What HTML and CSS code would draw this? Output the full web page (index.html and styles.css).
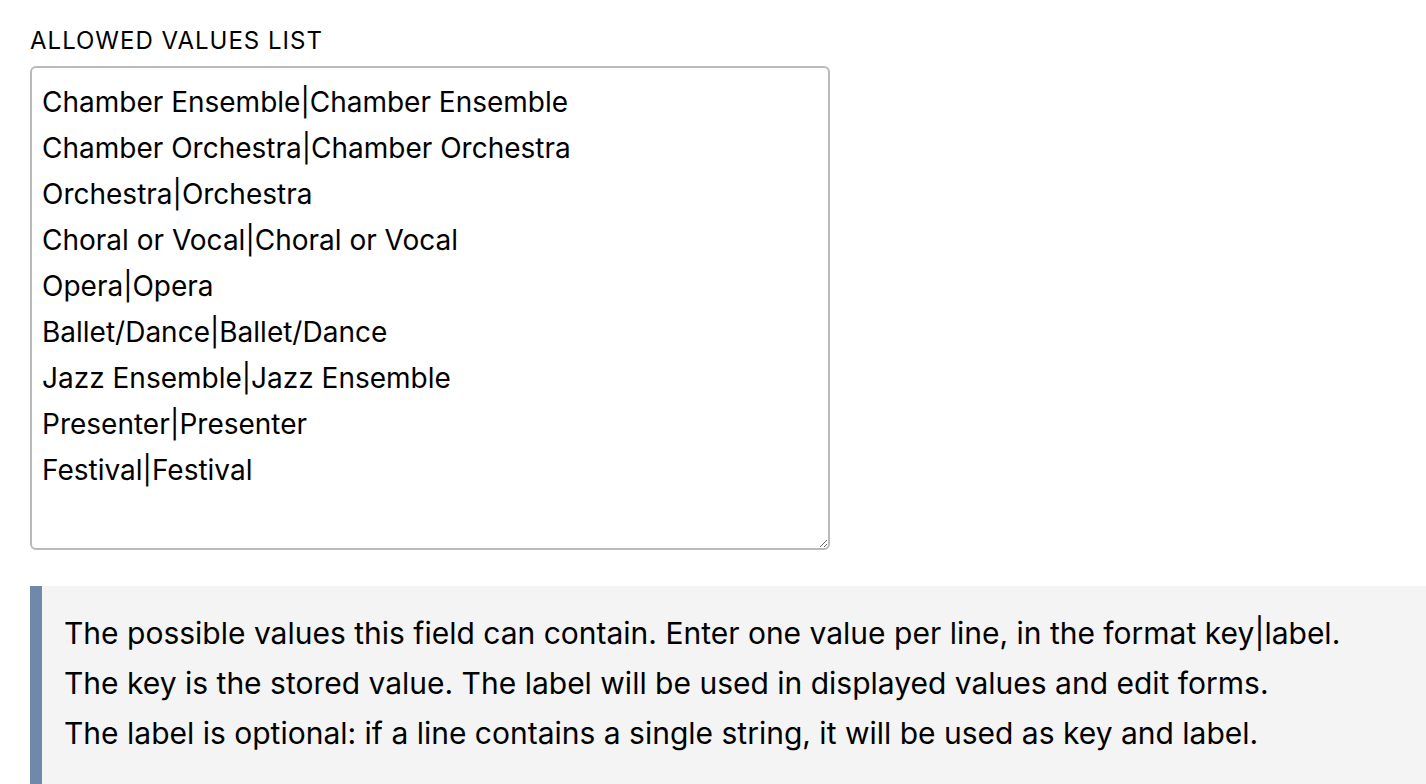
FILE: index.html
```html
<!DOCTYPE html>
<html lang="en">
<head>
  <meta charset="UTF-8" />
  <title>Allowed values list</title>
  <link rel="stylesheet" href="styles.css">
</head>
<body>

  <div class="form-item">
    <label for="allowed-values" class="form-label">Allowed values list</label>
    <textarea id="allowed-values" class="form-textarea" rows="10">Chamber Ensemble|Chamber Ensemble
Chamber Orchestra|Chamber Orchestra
Orchestra|Orchestra
Choral or Vocal|Choral or Vocal
Opera|Opera
Ballet/Dance|Ballet/Dance
Jazz Ensemble|Jazz Ensemble
Presenter|Presenter
Festival|Festival</textarea>
  </div>

  <div class="description">
    The possible values this field can contain. Enter one value per line, in the format key|label.<br>
    The key is the stored value. The label will be used in displayed values and edit forms.<br>
    The label is optional: if a line contains a single string, it will be used as key and label.
  </div>

</body>
</html>
```
FILE: styles.css
```css
body {
  font-family: Inter, "Noto Sans", sans-serif;
  color: #000;
  margin: 0;
  padding: 27px 0 0 30px;
  background: #fff;
}
.form-label {
  display: block;
  font-size: 24px;
  line-height: 1.2;
  letter-spacing: 1px;
  text-transform: uppercase;
  margin-bottom: 10px;
}
.form-textarea {
  display: block;
  box-sizing: border-box;
  width: 800px;
  height: 484px;
  margin: 0;
  padding: 11px 10px;
  border: 2px solid #b9b9b9;
  border-radius: 6px;
  font-family: inherit;
  font-size: 28px;
  line-height: 46px;
  color: #000;
  background: #fff;
}
.description {
  margin-top: 36px;
  padding: 22px 24px 26px 22px;
  border-left: 12px solid #7189a8;
  background: #f4f4f4;
  font-size: 30px;
  line-height: 50px;
}
```
